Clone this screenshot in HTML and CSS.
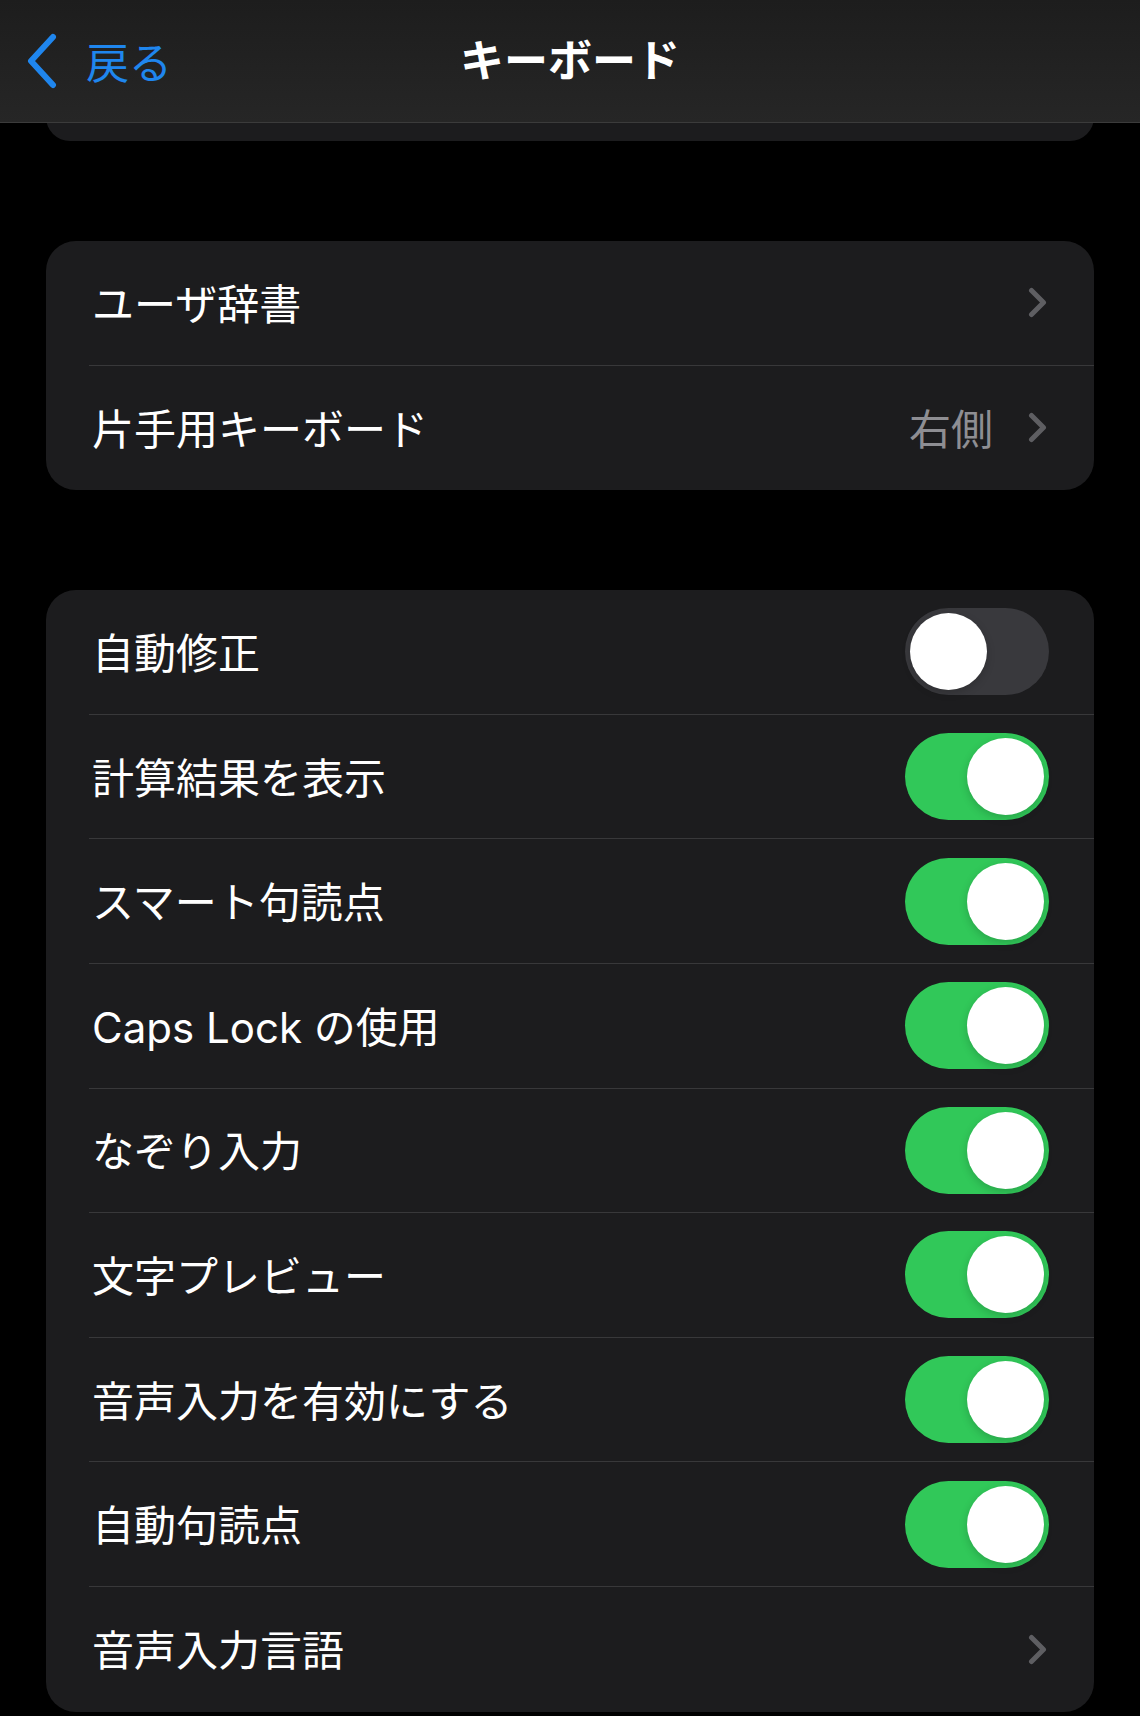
FILE: index.html
```html
<!DOCTYPE html>
<html lang="ja">
<head>
  <meta charset="UTF-8" />
  <meta name="viewport" content="width=device-width, initial-scale=1.0"/>
  <title>キーボード</title>
  <link rel="stylesheet" href="styles.css">
</head>
<body>
  <header class="nav-bar">
    <a class="nav-back" href="#">
      <svg class="back-icon" width="32" height="56" viewBox="0 0 32 56">
        <path d="M27 4 L5 28 L27 52" />
      </svg>
      <span>戻る</span>
    </a>
    <h1 class="nav-title">キーボード</h1>
    <div></div>
  </header>

  <main class="content">
    <div class="group group-cut"></div>

    <ul class="group">
      <li class="row">
        <div class="row-inner">
          <span class="label">ユーザ辞書</span>
          <svg class="chevron" width="19" height="31" viewBox="0 0 19 31"><path d="M3.5 3.5 L15.5 15.5 L3.5 27.5" /></svg>
        </div>
      </li>
      <li class="row">
        <div class="row-inner">
          <span class="label">片手用キーボード</span>
          <span class="value">右側</span>
          <svg class="chevron" width="19" height="31" viewBox="0 0 19 31"><path d="M3.5 3.5 L15.5 15.5 L3.5 27.5" /></svg>
        </div>
      </li>
    </ul>

    <ul class="group">
      <li class="row">
        <div class="row-inner">
          <span class="label">自動修正</span>
          <span class="switch"><span class="knob"></span></span>
        </div>
      </li>
      <li class="row">
        <div class="row-inner">
          <span class="label">計算結果を表示</span>
          <span class="switch on"><span class="knob"></span></span>
        </div>
      </li>
      <li class="row">
        <div class="row-inner">
          <span class="label">スマート句読点</span>
          <span class="switch on"><span class="knob"></span></span>
        </div>
      </li>
      <li class="row">
        <div class="row-inner">
          <span class="label">Caps Lock の使用</span>
          <span class="switch on"><span class="knob"></span></span>
        </div>
      </li>
      <li class="row">
        <div class="row-inner">
          <span class="label">なぞり入力</span>
          <span class="switch on"><span class="knob"></span></span>
        </div>
      </li>
      <li class="row">
        <div class="row-inner">
          <span class="label">文字プレビュー</span>
          <span class="switch on"><span class="knob"></span></span>
        </div>
      </li>
      <li class="row">
        <div class="row-inner">
          <span class="label">音声入力を有効にする</span>
          <span class="switch on"><span class="knob"></span></span>
        </div>
      </li>
      <li class="row">
        <div class="row-inner">
          <span class="label">自動句読点</span>
          <span class="switch on"><span class="knob"></span></span>
        </div>
      </li>
      <li class="row">
        <div class="row-inner">
          <span class="label">音声入力言語</span>
          <svg class="chevron" width="19" height="31" viewBox="0 0 19 31"><path d="M3.5 3.5 L15.5 15.5 L3.5 27.5" /></svg>
        </div>
      </li>
    </ul>
  </main>
</body>
</html>
```

FILE: styles.css
```css
body {
  font-family: 'Inter', 'Noto Sans CJK JP', sans-serif;
  background-color: #000;
  color: #fff;
  margin: 0;
  padding: 0;
}

.nav-bar {
  position: sticky;
  top: 0;
  z-index: 2;
  height: 122px;
  display: grid;
  grid-template-columns: 1fr auto 1fr;
  align-items: center;
  background: linear-gradient(#1d1d1d, #262626);
  border-bottom: 1px solid #3b3b3b;
}

.nav-back {
  display: flex;
  align-items: center;
  gap: 28px;
  padding-left: 26px;
  color: #1f86ee;
  text-decoration: none;
  font-size: 43px;
  line-height: 1;
}

.nav-back span {
  padding-top: 4px;
}

.back-icon path {
  fill: none;
  stroke: #1f86ee;
  stroke-width: 6;
  stroke-linecap: round;
  stroke-linejoin: round;
}

.nav-title {
  margin: 0;
  font-size: 44px;
  font-weight: 700;
  line-height: 1;
  color: #fff;
}

.content {
  padding-bottom: 4px;
}

.group {
  list-style: none;
  margin: 100px 46px 0;
  padding: 0;
  background-color: #1c1c1e;
  border-radius: 30px;
  overflow: hidden;
}

.group-cut {
  margin-top: -30px;
  height: 48px;
}

.row {
  height: 124.6px;
  padding-left: 43px;
}

.row-inner {
  height: 100%;
  box-sizing: border-box;
  display: flex;
  align-items: center;
  padding-left: 3px;
  padding-right: 45px;
  border-bottom: 1px solid #38383a;
}

.row:last-child .row-inner {
  border-bottom: none;
}

.label {
  flex: 1;
  font-size: 42px;
  line-height: 1;
  padding-top: 4px;
  white-space: nowrap;
}

.value {
  font-size: 42px;
  line-height: 1;
  padding-top: 4px;
  color: #8e8e93;
  margin-right: 35px;
}

.chevron {
  margin-right: 2px;
}

.chevron path {
  fill: none;
  stroke: #5e5e62;
  stroke-width: 5;
  stroke-linecap: round;
  stroke-linejoin: round;
}

.switch {
  width: 144px;
  height: 87px;
  box-sizing: border-box;
  padding: 5px;
  border-radius: 44px;
  background-color: #39393d;
  display: flex;
  justify-content: flex-start;
  align-items: center;
}

.switch.on {
  background-color: #31c859;
  justify-content: flex-end;
}

.knob {
  width: 77px;
  height: 77px;
  border-radius: 50%;
  background-color: #fff;
  box-shadow: 0 3px 8px rgba(0, 0, 0, 0.18);
}
```
